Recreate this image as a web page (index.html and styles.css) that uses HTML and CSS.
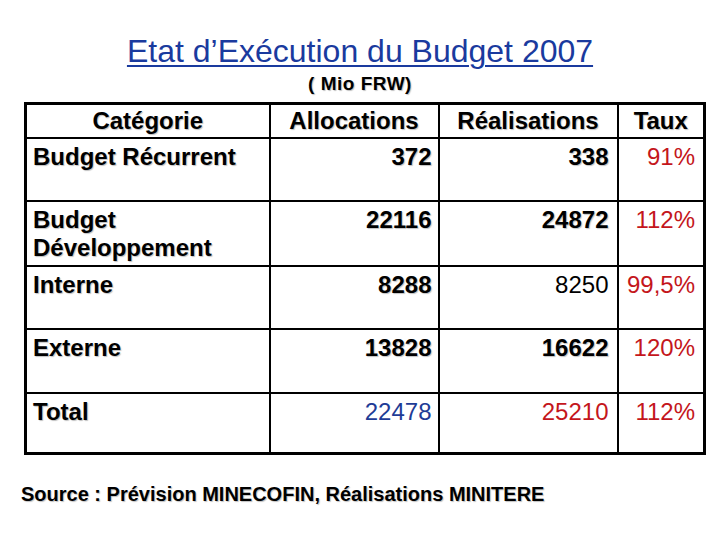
FILE: index.html
```html
<!DOCTYPE html>
<html lang="fr">
<head>
<meta charset="utf-8">
<title>Etat d'Exécution du Budget 2007</title>
<link rel="stylesheet" href="styles.css">
</head>
<body>
<main class="slide">
  <h1 class="title">Etat d’Exécution du Budget 2007</h1>
  <p class="subtitle">( Mio FRW)</p>
  <table class="budget">
    <colgroup>
      <col class="c-cat">
      <col class="c-alloc">
      <col class="c-real">
      <col class="c-taux">
    </colgroup>
    <thead>
      <tr class="head">
        <th>Catégorie</th>
        <th>Allocations</th>
        <th>Réalisations</th>
        <th>Taux</th>
      </tr>
    </thead>
    <tbody>
      <tr class="r1">
        <td class="label">Budget Récurrent</td>
        <td class="num b pa">372</td>
        <td class="num b pr">338</td>
        <td class="num red pt">91%</td>
      </tr>
      <tr class="r2">
        <td class="label">Budget<br>Développement</td>
        <td class="num b pa">22116</td>
        <td class="num b pr">24872</td>
        <td class="num red pt">112%</td>
      </tr>
      <tr class="r3">
        <td class="label">Interne</td>
        <td class="num b pa">8288</td>
        <td class="num pr">8250</td>
        <td class="num red pt">99,5%</td>
      </tr>
      <tr class="r4">
        <td class="label">Externe</td>
        <td class="num b pa">13828</td>
        <td class="num b pr">16622</td>
        <td class="num red pt">120%</td>
      </tr>
      <tr class="r5">
        <td class="label">Total</td>
        <td class="num blue pa">22478</td>
        <td class="num red pr">25210</td>
        <td class="num red pt">112%</td>
      </tr>
    </tbody>
  </table>
  <p class="source">Source : Prévision MINECOFIN, Réalisations MINITERE</p>
</main>
</body>
</html>
```

FILE: styles.css
```css
html, body {
  margin: 0;
  padding: 0;
  background: #ffffff;
}

.slide {
  width: 720px;
  height: 540px;
  padding-top: 33px;
  box-sizing: border-box;
  font-family: "Liberation Sans", Arial, sans-serif;
  color: #000;
}

.title {
  margin: 0;
  text-align: center;
  font-size: 32px;
  line-height: 37px;
  font-weight: normal;
  color: #1a3a9e;
  text-decoration: underline;
  text-decoration-thickness: 2px;
  text-underline-offset: 3px;
}

.subtitle {
  margin: 3px 0 0;
  text-align: center;
  font-size: 19px;
  line-height: 22px;
  font-weight: bold;
  letter-spacing: 0.5px;
  text-shadow: 1px 1px 1px rgba(0, 0, 0, 0.25);
}

.budget {
  margin: 7px 0 0 24px;
  width: 679px;
  table-layout: fixed;
  border-collapse: collapse;
  border: 3px solid #000;
  font-size: 24px;
  line-height: 28px;
}

.c-cat { width: 244px; }
.c-alloc { width: 169px; }
.c-real { width: 179px; }
.c-taux { width: 87px; }

.budget th,
.budget td {
  border: 2px solid #000;
  padding: 0;
}

.head { height: 34px; }
.budget .head th {
  font-weight: bold;
  text-align: center;
  vertical-align: middle;
  text-shadow: 1px 1px 1px rgba(0, 0, 0, 0.25);
}

.r1 { height: 63px; }
.r2 { height: 65px; }
.r3 { height: 63px; }
.r4 { height: 64px; }
.r5 { height: 61px; }

.budget td {
  vertical-align: top;
  padding-top: 4px;
}

.budget .label {
  text-align: left;
  padding-left: 6px;
  font-weight: bold;
  text-shadow: 1px 1px 1px rgba(0, 0, 0, 0.25);
}

.budget .num {
  text-align: right;
  font-weight: normal;
}

.budget .pa { padding-right: 6px; }
.budget .pr { padding-right: 8px; }
.budget .pt { padding-right: 8px; }

.budget .b {
  font-weight: bold;
  text-shadow: 1px 1px 1px rgba(0, 0, 0, 0.25);
}

.red { color: #c4161c; }
.blue { color: #1e3c96; }

.source {
  margin: 28px 0 0 21px;
  font-size: 20px;
  line-height: 23px;
  font-weight: bold;
  text-shadow: 1px 1px 1px rgba(0, 0, 0, 0.25);
}
```
